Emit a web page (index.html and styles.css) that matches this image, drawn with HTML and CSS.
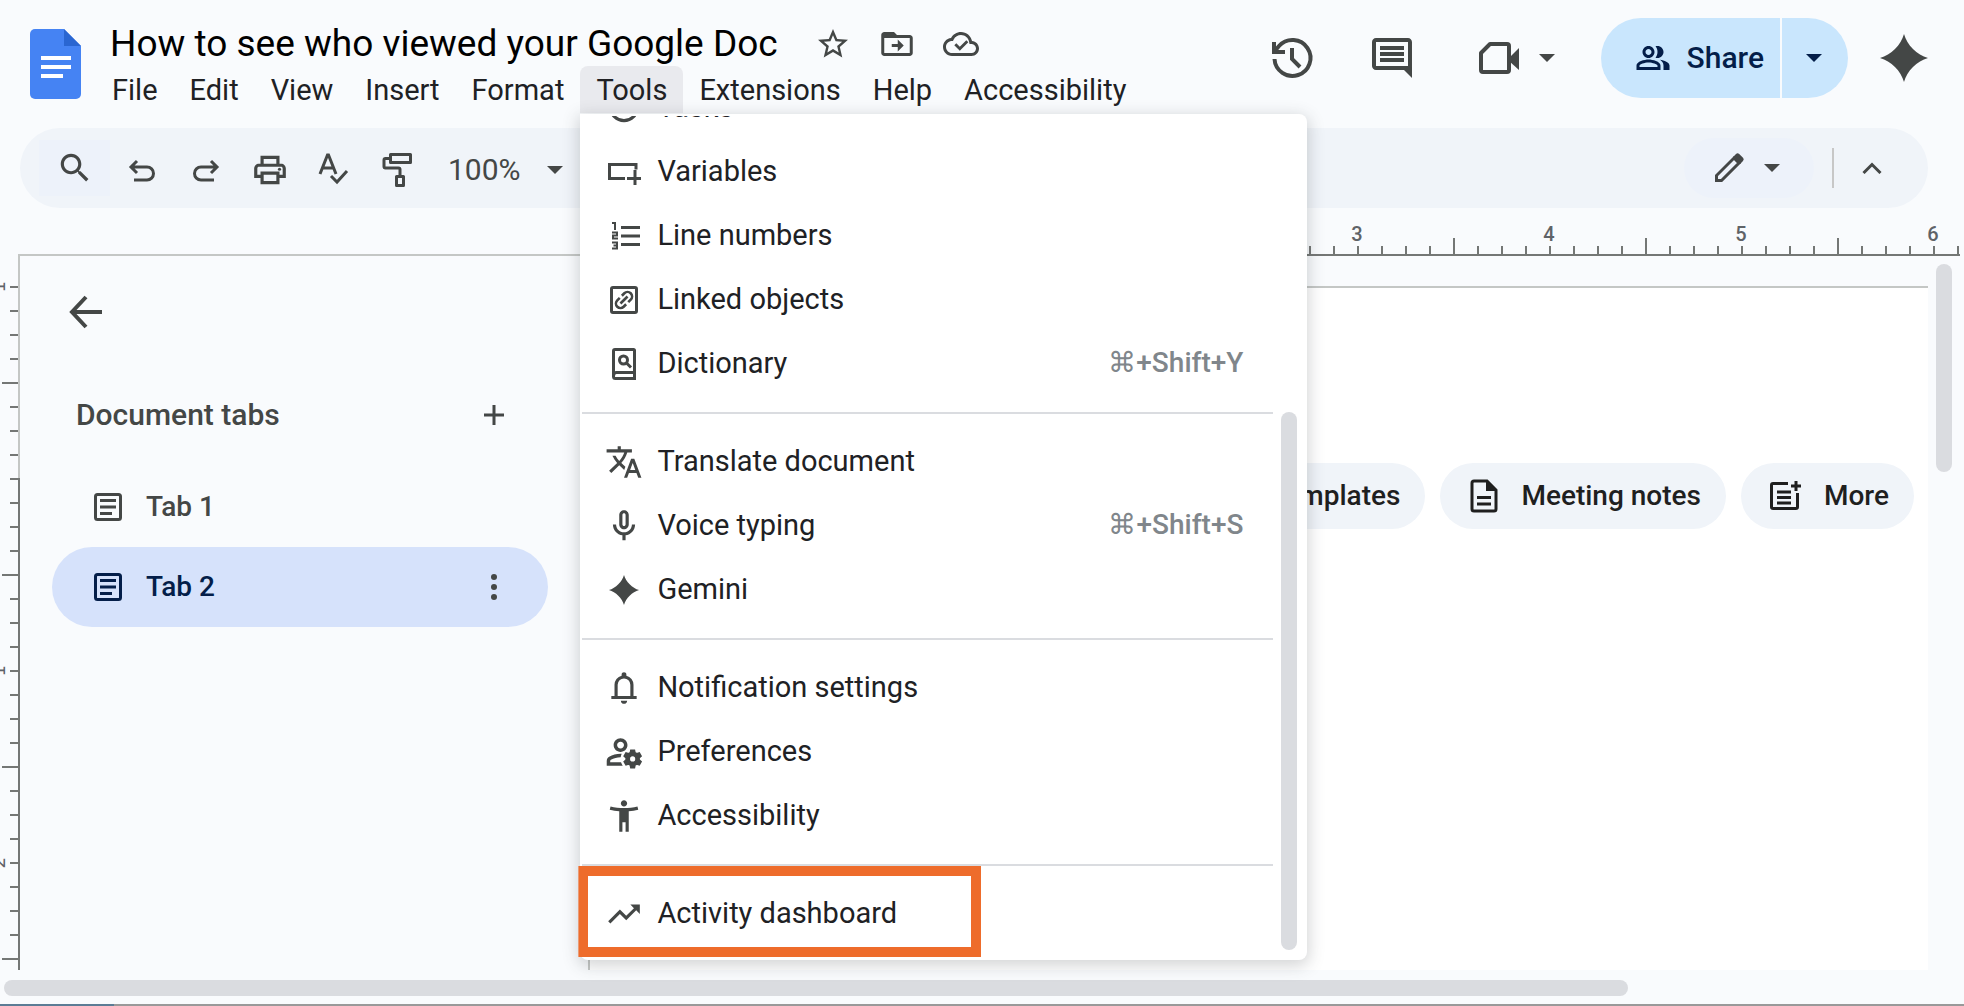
FILE: index.html
```html
<!DOCTYPE html>
<html lang="en">
<head>
<meta charset="utf-8">
<meta name="viewport" content="width=device-width, initial-scale=1">
<title>How to see who viewed your Google Doc</title>
<link rel="stylesheet" href="styles.css">
</head>
<body>
<header class="header">
  <a class="logo" href="#" aria-label="Docs home">
    <svg viewBox="0 0 51 70" width="51" height="70"><path fill="#4583f3" d="M5 0h29l17 17v48a5 5 0 0 1-5 5H5a5 5 0 0 1-5-5V5a5 5 0 0 1 5-5z"/><path fill="#2a66d1" d="M34 0l17 17H34z"/><path fill="#fff" d="M11 27h30v4H11zM11 36h30v4H11zM11 45h22v4H11z"/></svg>
  </a>
  <div class="heading">
    <div class="title-row">
      <h1 class="title">How to see who viewed your Google Doc</h1>
      <button class="icon-btn" aria-label="Star"><svg class="i36" viewBox="0 0 24 24"><path d="M22 9.240l-7.190-.62L12 2 9.190 8.630 2 9.240l5.460 4.730L5.820 21 12 17.270 18.180 21l-1.630-7.030L22 9.240zM12 15.400l-3.760 2.270 1-4.280-3.320-2.880 4.380-.38L12 6.100l1.710 4.040 4.380.38-3.320 2.880 1 4.280L12 15.400z"/></svg></button>
      <button class="icon-btn" aria-label="Move"><svg class="i36" viewBox="0 0 24 24"><path d="M20.500 6H12l-2-2H3.500C2.400 4 1.500 4.900 1.500 6v12c0 1.100.9 2 2 2h17c1.100 0 2-.9 2-2V8c0-1.100-.9-2-2-2zm0 12h-17V8h17v10zm-8-1l4-4-4-4v3h-4v2h4z"/></svg></button>
      <button class="icon-btn" aria-label="Saved to Drive"><svg class="i36" viewBox="0 0 24 24"><path d="M19.350 10.040C18.670 6.590 15.640 4 12 4 9.110 4 6.600 5.640 5.350 8.040 2.340 8.360 0 10.910 0 14c0 3.310 2.690 6 6 6h13c2.760 0 5-2.240 5-5 0-2.640-2.050-4.780-4.650-4.960zM19 18H6c-2.210 0-4-1.790-4-4 0-2.050 1.530-3.760 3.560-3.970l1.070-.11.5-.95C8.080 7.140 9.940 6 12 6c2.620 0 4.880 1.860 5.390 4.430l.3 1.500 1.530.11c1.560.1 2.780 1.410 2.780 2.960 0 1.650-1.350 3-3 3z"/><path d="M8.200 12.200l3 3 5-5" fill="none" stroke="currentColor" stroke-width="1.900"/></svg></button>
    </div>
    <nav class="menubar" aria-label="Document menus">
      <button class="menu-btn">File</button>
      <button class="menu-btn">Edit</button>
      <button class="menu-btn">View</button>
      <button class="menu-btn">Insert</button>
      <button class="menu-btn">Format</button>
      <div class="menu-anchor">
        <button class="menu-btn open" aria-expanded="true">Tools</button>
        <div class="dropdown">
          <div class="dropdown-list">
            <button class="item"><svg class="i38" viewBox="0 0 24 24"><circle cx="12" cy="11.500" r="8.500" fill="none" stroke="currentColor" stroke-width="2"/><path d="M8 11l3 3 6-6" fill="none" stroke="currentColor" stroke-width="2"/></svg><span class="label">Tasks</span></button>
            <button class="item"><svg class="i38" viewBox="0 0 38 38"><path d="M31 16.500V11.500H4.500v14H20M30 17v15M22 25.500h14" fill="none" stroke="currentColor" stroke-width="3"/></svg><span class="label">Variables</span></button>
            <button class="item"><svg class="i38" viewBox="0 0 38 38"><path d="M16 10.500h19M16 19h19M16 27.500h19" fill="none" stroke="currentColor" stroke-width="3"/><path d="M7 6h3v7M7 15.500h5v3H8v3h5M7 25.500h5v6H7M8.500 28.500H12" fill="none" stroke="currentColor" stroke-width="2"/></svg><span class="label">Line numbers</span></button>
            <button class="item"><svg class="i38" viewBox="0 0 38 38"><rect x="6.500" y="6.500" width="25" height="25" rx="1.500" fill="none" stroke="currentColor" stroke-width="3"/><g transform="translate(19 19) rotate(-45)" fill="none" stroke="currentColor" stroke-width="2.600"><path d="M-1.500-4.500H-5a4.500 4.500 0 0 0 0 9h3.500M1.500-4.500H5a4.500 4.500 0 0 1 0 9H1.500M-5 0H5"/></g></svg><span class="label">Linked objects</span></button>
            <button class="item"><svg class="i38" viewBox="0 0 38 38"><path d="M10 4.500h18.500a1 1 0 0 1 1 1V33.500H10.500a2 2 0 0 1-2-2V6a1.500 1.500 0 0 1 1.500-1.500zM8.500 31q0-3.500 3-3.500h18" fill="none" stroke="currentColor" stroke-width="3"/><circle cx="18.500" cy="15" r="4" fill="none" stroke="currentColor" stroke-width="3"/><path d="M21.500 18l4.500 4.500" stroke="currentColor" stroke-width="3"/></svg><span class="label">Dictionary</span><kbd class="keys">⌘+Shift+Y</kbd></button>
            <hr class="rule">
            <button class="item"><svg class="i38" viewBox="0 0 24 24"><path d="M12.870 15.070l-2.540-2.510.03-.03c1.740-1.940 2.980-4.170 3.710-6.530H17V4h-7V2H8v2H1v1.990h11.170C11.500 7.920 10.440 9.750 9 11.350 8.070 10.320 7.300 9.190 6.690 8h-2c.73 1.630 1.730 3.170 2.980 4.560l-5.090 5.020L4 19l5-5 3.110 3.110.76-2.040zM18.500 10h-2L12 22h2l1.120-3h4.750L21 22h2l-4.500-12zm-2.620 7l1.620-4.330L19.120 17h-3.240z"/></svg><span class="label">Translate document</span></button>
            <button class="item"><svg class="i38" viewBox="0 0 24 24"><path d="M12 14c1.660 0 3-1.340 3-3V5c0-1.660-1.340-3-3-3S9 3.340 9 5v6c0 1.660 1.340 3 3 3zm-1-9c0-.55.45-1 1-1s1 .45 1 1v6c0 .55-.45 1-1 1s-1-.45-1-1V5zm6 6c0 2.760-2.240 5-5 5s-5-2.240-5-5H5c0 3.530 2.610 6.430 6 6.920V21h2v-3.080c3.390-.49 6-3.390 6-6.920h-2z"/></svg><span class="label">Voice typing</span><kbd class="keys">⌘+Shift+S</kbd></button>
            <button class="item"><svg class="i38" viewBox="-12 -12 24 24"><path d="M0-9.500C1.200-5.200 5.200-1.200 9.500 0 5.200 1.200 1.200 5.200 0 9.500-1.200 5.200-5.200 1.200-9.500 0-5.200-1.200-1.200-5.200 0-9.500z"/></svg><span class="label">Gemini</span></button>
            <hr class="rule">
            <button class="item"><svg class="i38" viewBox="0 0 24 24"><path d="M4 19v-2h2v-7q0-2.075 1.250-3.687T10.500 4.200v-.7q0-.625.438-1.062T12 2t1.063.438T13.500 3.500v.7q2 .5 3.250 2.113T18 10v7h2v2zm8 3q-.825 0-1.412-.587T10 20h4q0 .825-.587 1.413T12 22m-4-5h8v-7q0-1.650-1.175-2.825T12 6T9.175 7.175T8 10z"/></svg><span class="label">Notification settings</span></button>
            <button class="item"><svg class="i38" viewBox="1 1 22 22"><path d="M4 18v-.65c0-.34.16-.66.41-.81C6.100 15.530 8.030 15 10 15c.03 0 .05 0 .08.01.1-.7.3-1.370.59-1.980-.22-.02-.44-.03-.67-.03-2.420 0-4.680.67-6.610 1.820-.88.52-1.390 1.500-1.390 2.530V20h9.260c-.42-.6-.75-1.280-.97-2H4zM10 12c2.210 0 4-1.790 4-4s-1.790-4-4-4-4 1.790-4 4 1.790 4 4 4zm0-6c1.100 0 2 .9 2 2s-.9 2-2 2-2-.9-2-2 .9-2 2-2z"/><path stroke="currentColor" d="M20.750 16c0-.22-.03-.42-.06-.63l1.140-1.010-1-1.730-1.450.49c-.32-.27-.68-.48-1.080-.63L18 11h-2l-.3 1.490c-.4.15-.76.36-1.080.63l-1.450-.49-1 1.730 1.140 1.010c-.03.21-.06.41-.06.63s.03.42.06.63l-1.140 1.010 1 1.730 1.450-.49c.32.27.68.48 1.080.63L16 21h2l.3-1.490c.4-.15.76-.36 1.080-.63l1.450.49 1-1.730-1.140-1.010c.03-.21.06-.41.06-.63zM17 18c-1.100 0-2-.9-2-2s.9-2 2-2 2 .9 2 2-.9 2-2 2z"/></svg><span class="label">Preferences</span></button>
            <button class="item"><svg class="i38" viewBox="0 0 24 24"><path d="M20.500 6c-2.610.7-5.670 1-8.500 1s-5.890-.3-8.500-1L3 8c1.860.5 4 .83 6 1v13h2v-6h2v6h2V9c2-.17 4.140-.5 6-1l-.5-2zM12 6c1.100 0 2-.9 2-2s-.9-2-2-2-2 .9-2 2 .9 2 2 2z"/></svg><span class="label">Accessibility</span></button>
            <hr class="rule">
            <button class="item highlighted"><svg class="i38" viewBox="0 0 24 24"><path d="M16 6l2.290 2.290-4.880 4.880-4-4L2 16.590 3.410 18l6-6 4 4 6.300-6.290L22 12V6z"/></svg><span class="label">Activity dashboard</span></button>
          </div>
          <div class="dropdown-scroll"><div class="dropdown-thumb"></div></div>
        </div>
      </div>
      <button class="menu-btn">Extensions</button>
      <button class="menu-btn">Help</button>
      <button class="menu-btn">Accessibility</button>
    </nav>
  </div>
  <div class="actions">
    <button class="icon-btn" aria-label="Version history"><svg class="i48" viewBox="0 0 48 48"><g fill="none" stroke="currentColor" stroke-width="4"><path d="M6.500 25A18 18 0 1 0 11 12L6 18"/><path d="M6 8v10h11"/><path d="M24 14v11l8 8"/></g></svg></button>
    <button class="icon-btn" aria-label="Comments"><svg class="i48" viewBox="0 0 24 24"><path d="M21.990 4c0-1.100-.89-2-1.990-2H4c-1.100 0-2 .9-2 2v12c0 1.100.9 2 2 2h14l4 4-.01-18zM20 4v12H4V4h16zM6 12h12v2H6zm0-3h12v2H6zm0-3h12v2H6z"/></svg></button>
    <button class="icon-btn meet" aria-label="Join a call"><svg class="i48" viewBox="0 0 48 48"><path d="M15 10h17a2 2 0 0 1 2 2v24a2 2 0 0 1-2 2H8a2 2 0 0 1-2-2V19z" fill="none" stroke="currentColor" stroke-width="4" stroke-linejoin="round"/><path d="M34 24l10-10v22L34 27z"/></svg><svg class="caret" viewBox="0 0 16 8"><path d="M0 0h16L8 8z"/></svg></button>
    <div class="share">
      <button class="share-main"><svg class="i36" viewBox="0 0 24 24"><path d="M16.670 13.130C18.040 14.060 19 15.320 19 17v3h4v-3c0-2.180-3.570-3.470-6.330-3.870zM15 12c2.210 0 4-1.790 4-4s-1.790-4-4-4c-.47 0-.91.1-1.330.24C14.500 5.270 15 6.580 15 8s-.5 2.730-1.330 3.760c.42.14.86.24 1.330.24zM9 12c2.210 0 4-1.790 4-4s-1.790-4-4-4-4 1.790-4 4 1.790 4 4 4zm0-6c1.100 0 2 .9 2 2s-.9 2-2 2-2-.9-2-2 .9-2 2-2zM9 13c-2.670 0-8 1.340-8 4v3h16v-3c0-2.660-5.330-4-8-4zm6 5H3v-1c.2-.71 3.300-2 6-2s5.800 1.290 6 2v1z"/></svg>Share</button>
      <button class="share-more" aria-label="Share options"><svg class="caret" viewBox="0 0 16 8"><path d="M0 0h16L8 8z"/></svg></button>
    </div>
    <button class="icon-btn" aria-label="Ask Gemini"><svg class="i48" viewBox="-24 -24 48 48"><path d="M0-24C3-13 13-3 24 0 13 3 3 13 0 24-3 13-13 3-24 0-13-3-3-13 0-24z"/></svg></button>
  </div>
</header>

<div class="toolbar" role="toolbar">
  <button class="tool search" aria-label="Search the menus"><svg class="i38" viewBox="0 0 24 24"><path d="M15.500 14h-.79l-.28-.27C15.410 12.590 16 11.110 16 9.500 16 5.910 13.090 3 9.500 3S3 5.910 3 9.500 5.910 16 9.500 16c1.610 0 3.090-.59 4.230-1.570l.27.28v.79l5 4.990L20.490 19l-4.990-5zm-6 0C7.010 14 5 11.990 5 9.500S7.010 5 9.500 5 14 7.010 14 9.500 11.990 14 9.500 14z"/></svg></button>
  <button class="tool" aria-label="Undo"><svg class="i38" viewBox="0 0 38 38"><path d="M14 10l-6 6 6 6M9 16h15a6.500 6.500 0 0 1 0 13H11" fill="none" stroke="currentColor" stroke-width="3"/></svg></button>
  <button class="tool" aria-label="Redo"><svg class="i38" viewBox="0 0 38 38"><path d="M24 10l6 6-6 6M29 16H14a6.500 6.500 0 0 0 0 13h13" fill="none" stroke="currentColor" stroke-width="3"/></svg></button>
  <button class="tool" aria-label="Print"><svg class="i38" viewBox="0 0 24 24"><path d="M19 8h-1V3H6v5H5c-1.660 0-3 1.340-3 3v6h4v4h12v-4h4v-6c0-1.660-1.340-3-3-3zM8 5h8v3H8V5zm8 12v2H8v-4h8v2zm2-2v-2H6v2H4v-4c0-.55.45-1 1-1h14c.55 0 1 .45 1 1v4h-2z"/><circle cx="18" cy="11.500" r="1"/></svg></button>
  <button class="tool" aria-label="Spelling"><svg class="i38" viewBox="0 0 38 38"><path d="M5 23l7.500-19h1L21 23M8 17h10M16 25l6 6 10-11" fill="none" stroke="currentColor" stroke-width="3"/></svg></button>
  <button class="tool" aria-label="Paint format"><svg class="i38" viewBox="0 0 38 38"><path d="M11.500 3.500h20v8h-20zM11.500 7.500h-5A1.500 1.500 0 0 0 5 9v6.500A1.500 1.500 0 0 0 6.500 17h13a1.500 1.500 0 0 1 1.500 1.500V24M17.500 25.500h7v9h-7z" fill="none" stroke="currentColor" stroke-width="3" stroke-linejoin="round"/></svg></button>
  <button class="zoom">100%<svg class="caret" viewBox="0 0 16 8"><path d="M0 0h16L8 8z"/></svg></button>
  <button class="mode" aria-label="Editing mode"><svg class="i38" viewBox="0 0 38 38"><path d="M6.500 31.500v-5L24 9l5 5-17.500 17.500z" fill="none" stroke="currentColor" stroke-width="3"/><path d="M23 8l3-3q1.500-1.500 3.200 0l3.800 3.800q1.500 1.500 0 3.200l-3 3z"/></svg><svg class="caret" viewBox="0 0 16 8"><path d="M0 0h16L8 8z"/></svg></button>
  <button class="collapse" aria-label="Hide the menus"><svg viewBox="0 0 20 12" width="20" height="12"><path d="M1.500 11L10 2.500l8.500 8.500" fill="none" stroke="currentColor" stroke-width="3"/></svg></button>
</div>

<div class="ruler">
  <div class="ruler-side"></div>
  <div class="ruler-page"><span>3</span><span>4</span><span>5</span><span>6</span></div>
</div>

<div class="workspace">
  <div class="vruler"><div class="vmarks"><span>1</span><span></span><span>1</span><span>2</span></div></div>
  <aside class="sidebar">
    <button class="icon-btn back" aria-label="Close tabs"><svg class="i48" viewBox="0 0 48 48"><path d="M40 24H11M24 9L10 24l14 15" fill="none" stroke="currentColor" stroke-width="4"/></svg></button>
    <div class="side-head"><h2>Document tabs</h2><button class="icon-btn" aria-label="Add tab"><svg viewBox="0 0 20 20" width="20" height="20"><path d="M10 0v20M0 10h20" stroke="currentColor" stroke-width="3"/></svg></button></div>
    <button class="tab"><svg viewBox="0 0 28 28" width="28" height="28"><rect x="1.500" y="1.500" width="25" height="25" rx="2" fill="none" stroke="currentColor" stroke-width="3"/><path d="M6 7.500h16M6 14h16M6 20.500h12" stroke="currentColor" stroke-width="3"/></svg>Tab 1</button>
    <div class="tab current"><button class="tab-name"><svg viewBox="0 0 28 28" width="28" height="28"><rect x="1.500" y="1.500" width="25" height="25" rx="2" fill="none" stroke="currentColor" stroke-width="3"/><path d="M6 7.500h16M6 14h16M6 20.500h12" stroke="currentColor" stroke-width="3"/></svg>Tab 2</button><button class="icon-btn" aria-label="Tab options"><svg viewBox="0 0 20 28" width="20" height="28"><circle cx="10" cy="4" r="3"/><circle cx="10" cy="14" r="3"/><circle cx="10" cy="24" r="3"/></svg></button></div>
  </aside>
  <main class="page">
    <div class="chips">
      <button class="chip">Templates</button>
      <button class="chip"><svg viewBox="0 0 30 34" width="30" height="34"><path d="M5 2h13l9 9v19a2 2 0 0 1-2 2H5a2 2 0 0 1-2-2V4a2 2 0 0 1 2-2z" fill="none" stroke="currentColor" stroke-width="3"/><path d="M17 1l11 11H17z"/><path d="M8 18.500h14M8 25h14" stroke="currentColor" stroke-width="3"/></svg>Meeting notes</button>
      <button class="chip"><svg viewBox="1 0 32 32" width="32" height="32"><path d="M19 3.500H4a1.500 1.500 0 0 0-1.500 1.500v22A1.500 1.500 0 0 0 4 28.500h23a1.500 1.500 0 0 0 1.500-1.500V13M8 12h14M8 17.500h14M8 23h14M27 1v10M22 6h10" fill="none" stroke="currentColor" stroke-width="3"/></svg>More</button>
    </div>
  </main>
  <div class="vscroll"><div class="vthumb"></div></div>
</div>
<div class="hscroll"><div class="hthumb"></div></div>
<div class="window-edge"></div>
</body>
</html>
```
FILE: styles.css
```css
*, *::after { box-sizing: border-box; }
body {
  margin: 0;
  min-height: 100vh;
  display: flex;
  flex-direction: column;
  overflow: hidden;
  background: #f9fbfd;
  color: #202124;
  font: 28px/32px Roboto, "Liberation Sans", sans-serif;
}
button {
  margin: 0;
  padding: 0;
  border: 0;
  background: none;
  color: inherit;
  font: inherit;
  cursor: pointer;
}
svg { display: block; flex: none; fill: currentColor; }
.i36 { width: 36px; height: 36px; }
.i38 { width: 38px; height: 38px; }
.i48 { width: 48px; height: 48px; }
.caret { width: 16px; height: 8px; }
.icon-btn { color: #444746; flex: none; }

/* Header */
.header { display: flex; height: 128px; padding: 0 36px 0 30px; }
.logo { flex: none; padding-top: 29px; }
.heading { padding: 20px 0 0 15px; }
.title-row { display: flex; align-items: center; gap: 28px; height: 46px; padding: 2px 0 0 14px; }
.title { margin: 0 9px 0 0; font-weight: 400; font-size: 37px; line-height: 44px; white-space: nowrap; color: #000; }
.menubar { display: flex; font-size: 29px; }
.menu-btn { height: 47px; padding: 0 16px; white-space: nowrap; }
.menu-btn.open { background: #e9eaee; border-radius: 8px 8px 0 0; }
.menu-anchor { position: relative; }
.actions { display: flex; align-items: center; height: 80px; margin: 18px 0 0 auto; gap: 52px; }
.meet { display: flex; align-items: center; gap: 16px; margin-left: 7px; }
.share { display: flex; gap: 2px; height: 80px; margin: 0 -20px 0 -6px; color: #041e49; font-size: 30px; font-weight: 500; }
.share-main { display: flex; align-items: center; gap: 16px; padding: 0 16px 0 34px; border-radius: 40px 0 0 40px; background: #c9e6fd; }
.share-more { padding: 0 26px 0 24px; border-radius: 0 40px 40px 0; background: #c9e6fd; }

/* Tools menu */
.dropdown {
  position: absolute;
  z-index: 2;
  top: 48px;
  left: 0;
  width: 727px;
  height: 846px;
  display: flex;
  padding: 2px 10px 0 2px;
  border-radius: 0 8px 8px 8px;
  background: #fff;
  box-shadow: 0 4px 16px 2px rgba(60, 64, 67, .22);
}
.dropdown-list { flex: 1; display: flex; flex-direction: column; justify-content: flex-end; height: 830px; clip-path: inset(0 -4px -14px -4px); }
.item { position: relative; flex: none; display: flex; align-items: center; gap: 14px; height: 64px; padding: 0 30px 0 23px; text-align: left; color: #444746; }
.label { flex: 1; padding-bottom: 2px; color: #202124; }
.keys { padding-bottom: 2px; font: inherit; font-size: 28px; font-weight: 500; color: #80868b; }
.rule { flex: none; width: 100%; height: 2px; margin: 16px 0; border: 0; background: #dadce0; }
.highlighted::after { content: ""; position: absolute; inset: -16px auto -11px -4px; width: 403px; border: 10px solid #ee6c2b; }
.dropdown-scroll { display: flex; align-items: flex-end; width: 24px; padding: 0 0 10px 8px; }
.dropdown-thumb { width: 16px; height: 538px; border-radius: 8px; background: #dadce0; }

/* Toolbar */
.toolbar {
  display: flex;
  align-items: center;
  height: 80px;
  margin: 0 36px 0 20px;
  padding: 0 46px 0 19px;
  border-radius: 40px;
  background: #f0f4f9;
  color: #444746;
}
.tool { flex: none; display: flex; justify-content: center; width: 64px; padding-top: 4px; }
.search { width: 71px; height: 56px; padding: 0; align-items: center; background: #edf2fa; }
.zoom { display: flex; align-items: center; gap: 26px; margin-left: 18px; padding-top: 4px; font-size: 30px; }
.mode { display: flex; align-items: center; gap: 16px; height: 60px; margin-left: auto; padding: 0 34px 0 26px; border-radius: 30px; background: #edf2fa; }
.collapse { display: flex; align-items: center; height: 40px; margin-left: 18px; padding-left: 28px; border-left: 2px solid #c7c7c7; }

/* Horizontal ruler */
.ruler { display: flex; height: 48px; margin: 0 4px 0 18px; }
.ruler-side { flex: none; width: 571px; border-bottom: 2px solid #c4c7c5; }
.ruler-page {
  flex: 1;
  min-width: 0;
  display: flex;
  overflow: hidden;
  padding-left: 672px;
  border-bottom: 2px solid #747775;
  background:
    repeating-linear-gradient(90deg, #747775 0 2px, transparent 2px 192px) 96px 30px / 100% 16px no-repeat,
    repeating-linear-gradient(90deg, #747775 0 2px, transparent 2px 24px) 0 38px / 100% 8px no-repeat;
  font-size: 20px;
  line-height: 24px;
  font-weight: 500;
  color: #5f6368;
}
.ruler-page span { flex: none; width: 192px; padding-top: 14px; text-align: center; }

/* Workspace */
.workspace { flex: 1; display: flex; min-height: 716px; }
.vruler {
  flex: none;
  width: 20px;
  height: 714px;
  overflow: hidden;
  border-right: 2px solid #747775;
  border-image: linear-gradient(#c4c7c5 222px, #747775 222px) 1;
  background:
    repeating-linear-gradient(#747775 0 2px, transparent 2px 192px) 2px 126px / 16px 100% no-repeat,
    repeating-linear-gradient(#747775 0 2px, transparent 2px 24px) 10px 30px / 8px 100% no-repeat;
}
.vmarks { width: 8px; padding-top: 25px; font: 18px/22px "DejaVu Sans", sans-serif; color: #5f6368; }
.vmarks span { display: block; width: 22px; height: 192px; margin-left: -12px; writing-mode: sideways-lr; text-align: right; }
.sidebar { flex: none; width: 568px; padding: 32px 40px 0 32px; color: #444746; font-weight: 500; }
.back { display: block; margin-left: 10px; }
.side-head { display: flex; align-items: center; justify-content: space-between; height: 60px; margin-top: 49px; padding: 0 44px 0 24px; }
.side-head h2 { margin: 0; font: inherit; font-size: 30px; }
.tab { display: flex; align-items: center; gap: 24px; width: 100%; height: 80px; margin-top: 22px; padding: 0 44px 0 42px; border-radius: 40px; }
.current { justify-content: space-between; margin-top: 0; background: #d6e2fb; color: #041e49; }
.tab-name { display: flex; align-items: center; gap: 24px; }
.page { flex: 1; min-width: 0; margin-top: 30px; margin-bottom: 2px; border: solid #c4c7c5; border-width: 2px 0 0 2px; background: #fff; }
.chips { display: flex; justify-content: flex-end; gap: 15px; padding: 175px 14px 0 0; color: #1f1f1f; font-weight: 500; }
.chip { display: flex; align-items: center; gap: 22px; height: 66px; padding: 0 25px 0 29px; border-radius: 33px; background: #f0f4f9; white-space: nowrap; }
.vscroll { flex: none; width: 36px; padding: 8px; }
.vthumb { width: 16px; height: 208px; border-radius: 8px; background: #dadce0; }
.hscroll { padding: 8px 336px 8px 4px; }
.hthumb { height: 16px; border-radius: 8px; background: #dadce0; }
.window-edge { height: 2px; background: linear-gradient(90deg, #5b7c95 114px, #999 114px); }
```
